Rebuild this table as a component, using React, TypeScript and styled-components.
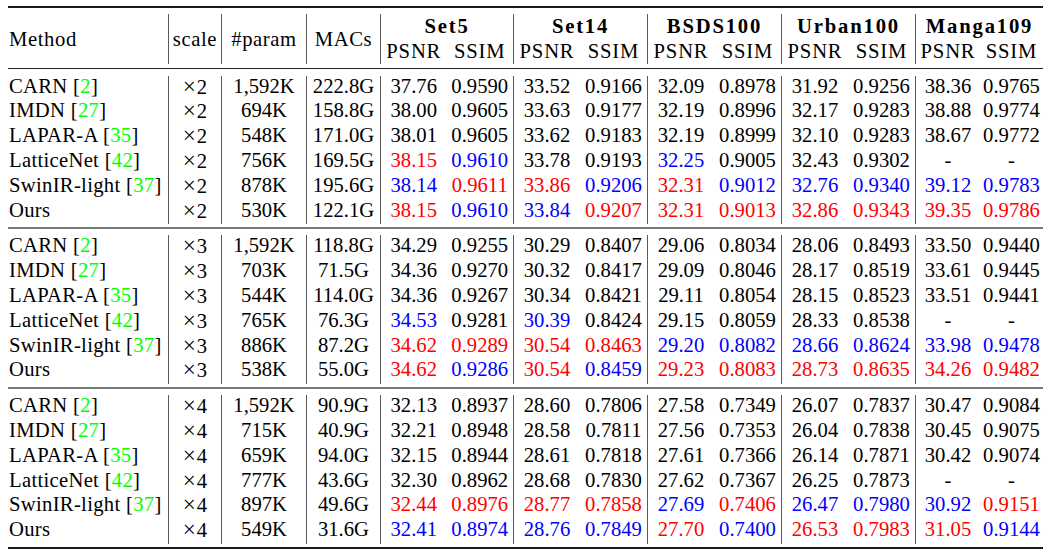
import React from "react";
import styled, { createGlobalStyle } from "styled-components";

const COLS =
  "160px 53px 85px 74px 66.5px 66.5px 67px 67px 67px 67px 67px 67px 65px 63px";

const GlobalStyle = createGlobalStyle`
  html, body {
    margin: 0;
    padding: 0;
    background: #fff;
  }
`;

const Table = styled.div`
  width: 1035px;
  margin: 6px 0 0 8px;
  border-top: 2px solid #1a1a1a;
  border-bottom: 2px solid #1a1a1a;
  font-family: "Liberation Serif", "Times New Roman", serif;
  font-size: 20.67px;
  color: #000;
`;

const HeaderGrid = styled.div`
  display: grid;
  grid-template-columns: ${COLS};
  grid-template-rows: 24.8px 24.8px;
  padding: 6px 0 4px;
  border-bottom: 1px solid #222;
`;

const Group = styled.div`
  display: grid;
  grid-template-columns: ${COLS};
  grid-auto-rows: 24.8px;
  padding: 7px 0 3px;

  & + & {
    border-top: 2px solid #777;
    padding-top: 6px;
  }
`;

const Divided = styled.div<{ $divider?: boolean }>`
  border-left: ${(p) => (p.$divider ? "1px solid #5a5a5a" : "none")};
`;

const SpanHead = styled(Divided)<{ $align?: "left" | "center" }>`
  grid-row: 1 / span 2;
  display: flex;
  align-items: center;
  justify-content: ${(p) => (p.$align === "left" ? "flex-start" : "center")};
  padding: 1px 0 0 ${(p) => (p.$align === "left" ? "1px" : "0")};
  line-height: 20.8px;
  letter-spacing: 0.6px;
  white-space: nowrap;
`;

const DatasetTitle = styled(Divided)`
  grid-row: 1;
  grid-column: span 2;
  text-align: center;
  font-weight: 700;
  letter-spacing: 1.8px;
  line-height: 20.8px;
  padding: 2px 0 2px;
  white-space: nowrap;
`;

const MetricLabel = styled(Divided)`
  grid-row: 2;
  text-align: center;
  line-height: 20.8px;
  padding: 2px 0 2px;
  letter-spacing: 0.8px;
  white-space: nowrap;
`;

const toneColor = { k: "#000", r: "#ff0000", b: "#0000ff" };

const Cell = styled(Divided)<{ $tone?: "k" | "r" | "b" }>`
  text-align: center;
  line-height: 20.8px;
  padding-bottom: 4px;
  white-space: nowrap;
  color: ${(p) => toneColor[p.$tone || "k"]};
`;

const MethodCell = styled(Cell)`
  text-align: left;
  padding-left: 1px;
  letter-spacing: 0.3px;
`;

const Times = styled.span`
  font-size: 1.12em;
  margin-right: 1px;
`;

const Cite = styled.span`
  color: #00ff00;
`;

type Row = {
  name: string;
  cite?: string;
  scale: string;
  param: string;
  macs: string;
  vals: string;
};

const DATASETS = ["Set5", "Set14", "BSDS100", "Urban100", "Manga109"];

const GROUPS: Row[][] = [
  [
    { name: "CARN", cite: "2", scale: "2", param: "1,592K", macs: "222.8G", vals: "37.76 0.9590 33.52 0.9166 32.09 0.8978 31.92 0.9256 38.36 0.9765" },
    { name: "IMDN", cite: "27", scale: "2", param: "694K", macs: "158.8G", vals: "38.00 0.9605 33.63 0.9177 32.19 0.8996 32.17 0.9283 38.88 0.9774" },
    { name: "LAPAR-A", cite: "35", scale: "2", param: "548K", macs: "171.0G", vals: "38.01 0.9605 33.62 0.9183 32.19 0.8999 32.10 0.9283 38.67 0.9772" },
    { name: "LatticeNet", cite: "42", scale: "2", param: "756K", macs: "169.5G", vals: "r38.15 b0.9610 33.78 0.9193 b32.25 0.9005 32.43 0.9302 - -" },
    { name: "SwinIR-light", cite: "37", scale: "2", param: "878K", macs: "195.6G", vals: "b38.14 r0.9611 r33.86 b0.9206 r32.31 b0.9012 b32.76 b0.9340 b39.12 b0.9783" },
    { name: "Ours", scale: "2", param: "530K", macs: "122.1G", vals: "r38.15 b0.9610 b33.84 r0.9207 r32.31 r0.9013 r32.86 r0.9343 r39.35 r0.9786" },
  ],
  [
    { name: "CARN", cite: "2", scale: "3", param: "1,592K", macs: "118.8G", vals: "34.29 0.9255 30.29 0.8407 29.06 0.8034 28.06 0.8493 33.50 0.9440" },
    { name: "IMDN", cite: "27", scale: "3", param: "703K", macs: "71.5G", vals: "34.36 0.9270 30.32 0.8417 29.09 0.8046 28.17 0.8519 33.61 0.9445" },
    { name: "LAPAR-A", cite: "35", scale: "3", param: "544K", macs: "114.0G", vals: "34.36 0.9267 30.34 0.8421 29.11 0.8054 28.15 0.8523 33.51 0.9441" },
    { name: "LatticeNet", cite: "42", scale: "3", param: "765K", macs: "76.3G", vals: "b34.53 0.9281 b30.39 0.8424 29.15 0.8059 28.33 0.8538 - -" },
    { name: "SwinIR-light", cite: "37", scale: "3", param: "886K", macs: "87.2G", vals: "r34.62 r0.9289 r30.54 r0.8463 b29.20 b0.8082 b28.66 b0.8624 b33.98 b0.9478" },
    { name: "Ours", scale: "3", param: "538K", macs: "55.0G", vals: "r34.62 b0.9286 r30.54 b0.8459 r29.23 r0.8083 r28.73 r0.8635 r34.26 r0.9482" },
  ],
  [
    { name: "CARN", cite: "2", scale: "4", param: "1,592K", macs: "90.9G", vals: "32.13 0.8937 28.60 0.7806 27.58 0.7349 26.07 0.7837 30.47 0.9084" },
    { name: "IMDN", cite: "27", scale: "4", param: "715K", macs: "40.9G", vals: "32.21 0.8948 28.58 0.7811 27.56 0.7353 26.04 0.7838 30.45 0.9075" },
    { name: "LAPAR-A", cite: "35", scale: "4", param: "659K", macs: "94.0G", vals: "32.15 0.8944 28.61 0.7818 27.61 0.7366 26.14 0.7871 30.42 0.9074" },
    { name: "LatticeNet", cite: "42", scale: "4", param: "777K", macs: "43.6G", vals: "32.30 0.8962 28.68 0.7830 27.62 0.7367 26.25 0.7873 - -" },
    { name: "SwinIR-light", cite: "37", scale: "4", param: "897K", macs: "49.6G", vals: "r32.44 r0.8976 r28.77 r0.7858 b27.69 r0.7406 b26.47 b0.7980 b30.92 r0.9151" },
    { name: "Ours", scale: "4", param: "549K", macs: "31.6G", vals: "b32.41 b0.8974 b28.76 b0.7849 r27.70 b0.7400 r26.53 r0.7983 r31.05 b0.9144" },
  ],
];

// "r38.15" -> red, "b0.9610" -> blue, plain -> black
const parseVal = (raw: string) => {
  const first = raw[0];
  if (first === "r" || first === "b") return { tone: first as "r" | "b", text: raw.slice(1) };
  return { tone: "k" as const, text: raw };
};

const App: React.FC = () => {
  return (
    <>
      <GlobalStyle />
      <Table>
        <HeaderGrid>
          <SpanHead $align="left">Method</SpanHead>
          <SpanHead $divider>scale</SpanHead>
          <SpanHead $divider>#param</SpanHead>
          <SpanHead $divider>MACs</SpanHead>
          {DATASETS.map((d) => (
            <DatasetTitle key={d} $divider>
              {d}
            </DatasetTitle>
          ))}
          {DATASETS.map((d) => (
            <React.Fragment key={d}>
              <MetricLabel $divider>PSNR</MetricLabel>
              <MetricLabel>SSIM</MetricLabel>
            </React.Fragment>
          ))}
        </HeaderGrid>

        {GROUPS.map((rows, gi) => (
          <Group key={gi}>
            {rows.map((row) => (
              <React.Fragment key={row.name}>
                <MethodCell>
                  {row.name}
                  {row.cite && (
                    <>
                      {" "}[<Cite>{row.cite}</Cite>]
                    </>
                  )}
                </MethodCell>
                <Cell $divider>
                  <Times>{"\u00d7"}</Times>
                  {row.scale}
                </Cell>
                <Cell $divider>{row.param}</Cell>
                <Cell $divider>{row.macs}</Cell>
                {row.vals.split(" ").map((raw, i) => {
                  const v = parseVal(raw);
                  return (
                    <Cell key={i} $divider={i % 2 === 0} $tone={v.tone}>
                      {v.text}
                    </Cell>
                  );
                })}
              </React.Fragment>
            ))}
          </Group>
        ))}
      </Table>
    </>
  );
};

export default App;
